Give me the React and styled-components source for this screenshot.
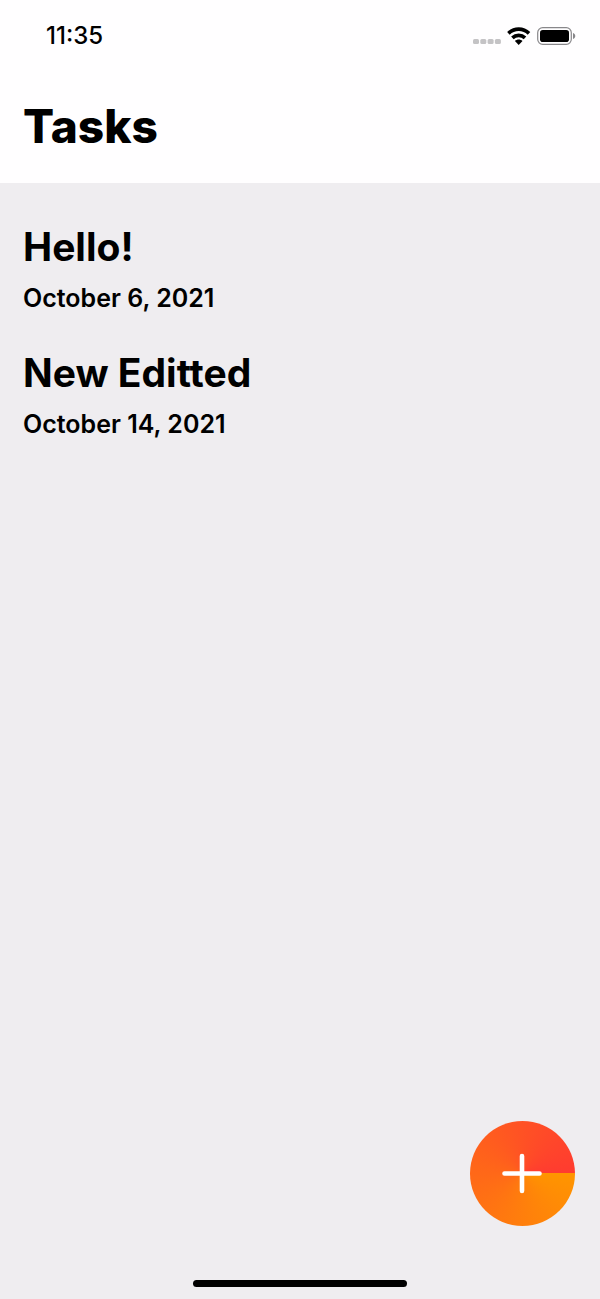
import React from "react";
import styled, { createGlobalStyle } from "styled-components";

const GlobalStyle = createGlobalStyle`
  *, *::before, *::after { box-sizing: border-box; }
  body {
    margin: 0;
    background: #efedf0;
    color: #000;
    font-family: Inter, "Liberation Sans", sans-serif;
  }
`;

const Screen = styled.div`
  display: flex;
  flex-direction: column;
  min-height: 100vh;
`;

const Header = styled.header`
  background: #fffeff;
  padding-bottom: 24px;
`;

const StatusBar = styled.div`
  display: flex;
  align-items: center;
  justify-content: space-between;
  height: 72px;
  padding: 0 24px 0 46px;
`;

const Clock = styled.time`
  font-size: 24px;
  font-weight: 500;
  line-height: 32px;
`;

const StatusIcons = styled.div`
  display: flex;
  align-items: center;
  gap: 6px;

  svg { display: block; }
`;

const Title = styled.h1`
  margin: 0;
  padding: 24px 23px 3px;
  font-size: 46px;
  font-weight: 800;
  line-height: 60px;
`;

const TaskList = styled.ul`
  display: flex;
  flex: 1;
  flex-direction: column;
  gap: 32px;
  margin: 0;
  padding: 40px 23px;
  list-style: none;
`;

const Task = styled.li`
  display: flex;
  flex-direction: column;
  gap: 8px;
`;

const TaskName = styled.h2`
  margin: 0;
  font-size: 39px;
  font-weight: 700;
  line-height: 48px;
`;

const TaskDate = styled.time`
  font-size: 25px;
  font-weight: 600;
  line-height: 38px;
`;

const AddButton = styled.button`
  position: fixed;
  right: 25px;
  bottom: 73px;
  display: grid;
  place-items: center;
  width: 105px;
  height: 105px;
  padding: 0;
  border: 0;
  border-radius: 50%;
  background: conic-gradient(from 90deg, #ff9500, #ff3b30);
  color: #fff;
  cursor: pointer;
`;

const Footer = styled.footer`
  display: flex;
  justify-content: center;
  padding-bottom: 12px;
`;

const HomeIndicator = styled.div`
  width: 214px;
  height: 7px;
  border-radius: 4px;
  background: #000;
`;

const SignalIcon = () => (
  <svg width="28" height="24" viewBox="0 0 28 24" fill="#c4c3c5" aria-hidden="true">
    <rect x="0" y="15" width="6" height="5" rx="1.5" />
    <rect x="7.3" y="15" width="6" height="5" rx="1.5" />
    <rect x="14.6" y="15" width="6" height="5" rx="1.5" />
    <rect x="21.9" y="15" width="6" height="5" rx="1.5" />
  </svg>
);

const WifiIcon = () => (
  <svg width="24" height="18" viewBox="0 0 24 18" aria-hidden="true">
    <g fill="none" stroke="#000" strokeWidth="3.6">
      <path d="M1.4 6.4C7.2.7 16.2.7 22 6.4" />
      <path d="M5.4 10.9c3.5-3.4 9.1-3.4 12.6 0" />
    </g>
    <path d="M11.7 17.9 7.9 14.1c2.1-2 5.5-2 7.6 0Z" />
  </svg>
);

const BatteryIcon = () => (
  <svg width="39" height="18" viewBox="0 0 39 18" aria-hidden="true">
    <rect x="0.7" y="0.7" width="33.6" height="16.6" rx="5" fill="none" stroke="#88878a" strokeWidth="1.2" />
    <rect x="3" y="3" width="29" height="12" rx="2.8" />
    <path d="M36 6c3 .8 3 5.2 0 6Z" fill="#88878a" />
  </svg>
);

const PlusIcon = () => (
  <svg width="41" height="41" viewBox="0 0 41 41" aria-hidden="true">
    <path d="M20 3v35M2.500 20.500h35" stroke="currentColor" strokeWidth="4.6" strokeLinecap="round" />
  </svg>
);

const tasks = [
  { name: "Hello!", date: "October 6, 2021", iso: "2021-10-06" },
  { name: "New Editted", date: "October 14, 2021", iso: "2021-10-14" },
];

export default function App() {
  return (
    <>
      <GlobalStyle />
      <Screen>
        <Header>
          <StatusBar>
            <Clock>11:35</Clock>
            <StatusIcons>
              <SignalIcon />
              <WifiIcon />
              <BatteryIcon />
            </StatusIcons>
          </StatusBar>
          <Title>Tasks</Title>
        </Header>
        <TaskList>
          {tasks.map((task) => (
            <Task key={task.iso}>
              <TaskName>{task.name}</TaskName>
              <TaskDate dateTime={task.iso}>{task.date}</TaskDate>
            </Task>
          ))}
        </TaskList>
        <Footer>
          <HomeIndicator />
        </Footer>
      </Screen>
      <AddButton type="button" aria-label="Add task">
        <PlusIcon />
      </AddButton>
    </>
  );
}
